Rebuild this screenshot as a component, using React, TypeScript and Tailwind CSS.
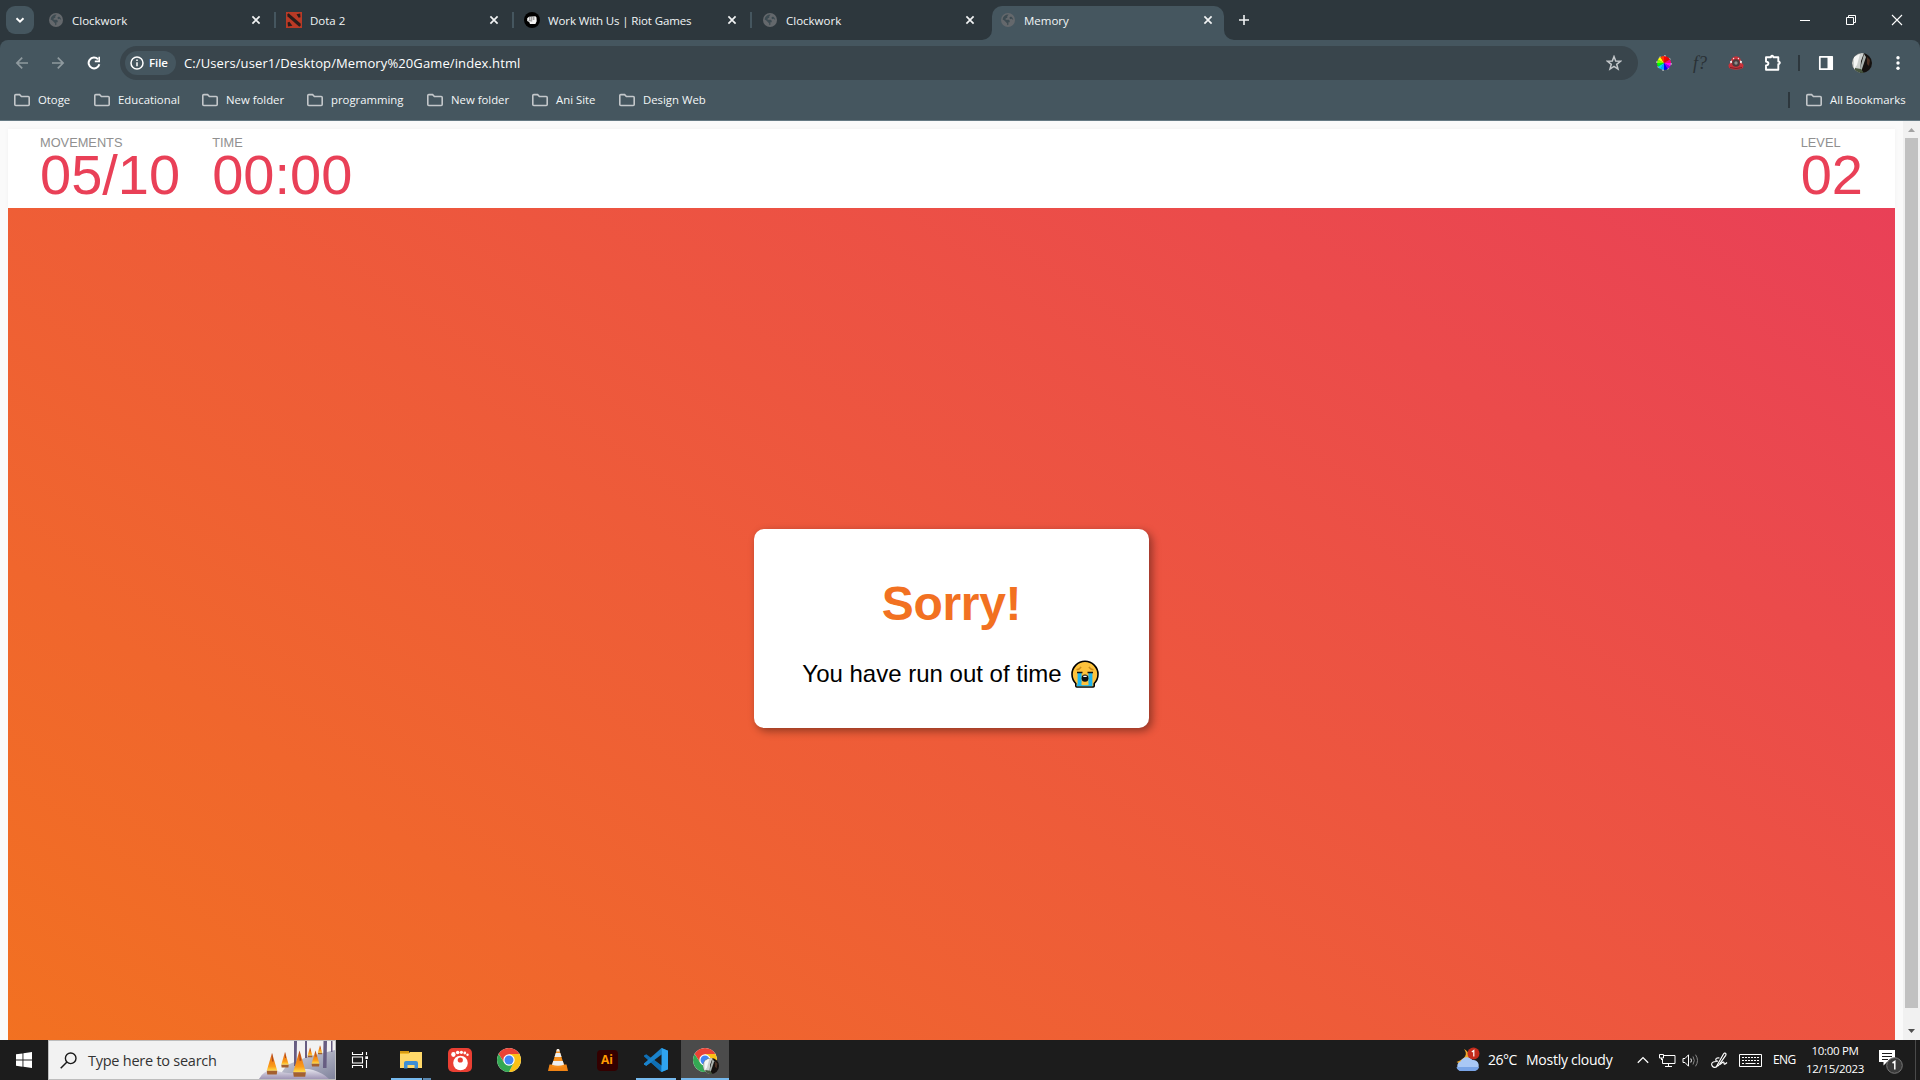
import React from "react";

const ui = "font-['Open_Sans','Noto_Sans',sans-serif]";

function Globe() {
  return (
    <svg width="14" height="14" viewBox="0 0 14 14" className="shrink-0">
      <circle cx="7" cy="7" r="7" fill="#64686c" />
      <path d="M7.6 1.6 6.3 3.3v1.4L4.6 5.6v1.2h3.2l.9 1v1.4H7.4v2.6l-1.2.4v-1.8L4.8 9 3 7.2 1.6 6.4a5.5 5.5 0 0 1 6-4.8Z" fill="#3d4b52" />
      <path d="M10 3.4 8.4 4.6l.6 1.6 1.6-.4 1.7 1.3a5.4 5.4 0 0 0-2.3-3.7Z" fill="#3d4b52" />
    </svg>
  );
}

function Dota() {
  return (
    <svg width="16" height="16" viewBox="0 0 16 16" className="shrink-0">
      <rect width="16" height="16" fill="#b93a26" />
      <path d="m1.2 2.4 1.4-1.2 12 10.2.2 2.200-1.500 1.100L1.600 4.600Z" fill="#2a1d1b" />
      <path d="m10.500 2.200 3.700-.6.3 3.600-1.800.6Z" fill="#2a1d1b" />
      <path d="m1.600 10.500 1.800-.8 3 4.100-4.400.6Z" fill="#2a1d1b" />
    </svg>
  );
}

function Fist() {
  return (
    <svg width="16" height="16" viewBox="0 0 16 16" className="shrink-0">
      <circle cx="8" cy="8" r="8" fill="#000" />
      <path d="M3.200 6.200 5 4.800l6.400-.6 1.100 1.200.2 3.800-1.300 2.700-5.400.2-.8-2.200-2-1Z" fill="#f4f4f4" />
      <path d="M5.800 5v3M7.800 4.800v3.400M9.800 4.700V8M4.600 8.600l3.600.4" stroke="#555" strokeWidth=".7" fill="none" />
    </svg>
  );
}

function CloseX() {
  return (
    <svg width="10" height="10" viewBox="0 0 10 10" className="shrink-0">
      <path d="m1.400 1.400 7.200 7.200m0-7.200L1.400 8.600" stroke="#f1f3f4" strokeWidth="1.700" />
    </svg>
  );
}

function Tab({ icon, title, sep, active }: { icon: React.ReactNode; title: string; sep?: boolean; active?: boolean }) {
  return (
    <div
      className={
        active
          ? "relative flex h-[34px] w-[232px] shrink-0 items-center rounded-t-[10px] bg-[#45565f] pb-[6px]"
          : "relative flex h-[34px] w-[238px] shrink-0 items-center pb-[6px]"
      }
    >
      <div className="ml-[8px] flex w-4 shrink-0 justify-center">{icon}</div>
      <span
        className={`ml-2 w-[179px] whitespace-nowrap pt-px text-[11.5px] leading-[16px] text-[#f1f5f6] ${
          title.length > 12 ? "tracking-[-0.12px]" : ""
        }`}
      >
        {title}
      </span>
      <CloseX />
      {sep && <div className="ml-[13px] h-4 w-[2px] bg-[#45565f]" />}
      {active && (
        <>
          <svg className="absolute bottom-0 -left-[10px]" width="10" height="10"><path d="M10 0v10H0A10 10 0 0 0 10 0Z" fill="#45565f" /></svg>
          <svg className="absolute -right-[10px] bottom-0" width="10" height="10"><path d="M0 0v10h10A10 10 0 0 1 0 0Z" fill="#45565f" /></svg>
        </>
      )}
    </div>
  );
}

function Folder() {
  return (
    <svg width="18" height="14" viewBox="0 0 18 14" className="shrink-0">
      <path d="M1.800 2.600q0-1 1-1H6.600l1.800 1.900h6.800q1 0 1 1v7q0 1-1 1H2.800q-1 0-1-1Z" fill="none" stroke="#c3c7ca" strokeWidth="1.600" />
    </svg>
  );
}

const bookmarks: [string, string][] = [
  ["Otoge", "w-[80px]"],
  ["Educational", "w-[108px]"],
  ["New folder", "w-[105px]"],
  ["programming", "w-[120px]"],
  ["New folder", "w-[105px]"],
  ["Ani Site", "w-[87px]"],
  ["Design Web", "w-[110px]"],
];

const wheel = ["#f00", "#ff3c00", "#ff0", "#7dff00", "#0f0", "#00d0ff", "#00a8ff", "#00f", "#80f", "#f0f", "#ff0080", "#e00"];

function ColorWheel() {
  return (
    <svg width="16" height="16" viewBox="-8 -8 16 16">
      {wheel.map((_, i) => {
        const a = ((i * 30 - 90) * Math.PI) / 180;
        const b = ((i * 30 - 60) * Math.PI) / 180;
        return <path key={i} d={`M0 0L${7 * Math.cos(a)} ${7 * Math.sin(a)}A7 7 0 0 1 ${7 * Math.cos(b)} ${7 * Math.sin(b)}Z`} fill={wheel[(12 - i) % 12]} />;
      })}
      <circle r="7.300" fill="none" stroke="#c9c9c9" strokeWidth=".9" strokeDasharray="2 3.700" />
    </svg>
  );
}

function Avatar({ size }: { size: number }) {
  return (
    <svg width={size} height={size} viewBox="0 0 20 20">
      <defs>
        <clipPath id={"av" + size}><circle cx="10" cy="10" r="10" /></clipPath>
      </defs>
      <g clipPath={`url(#av${size})`}>
        <rect width="20" height="20" fill="#15110f" />
        <path d="M0 0h12L9 8 8 20H0Z" fill="#cdd1cf" />
        <path d="M2 4 8 1 5 12 2 16Z" fill="#f5f6f5" />
        <path d="M12 1 7 19h2l5-15Z" fill="#aab1ad" />
        <path d="M15 4l3 3-1 6-2-2Z" fill="#4a2f22" />
        <path d="M3 15l6 1 3 4H3Z" fill="#46553f" />
      </g>
    </svg>
  );
}

function Browser() {
  return (
    <div className={`flex h-[121px] flex-col border-b border-[#657983] bg-[#2d373d] ${ui}`}>
      <div className="flex h-10 shrink-0 pt-[6px]">
        <div className="mr-[6px] ml-[6px] flex h-7 w-7 items-center justify-center rounded-[9px] bg-[#45565f]">
          <svg width="10" height="8" viewBox="0 0 10 8"><path d="m1.500 2.200 3.500 3.400 3.500-3.400" fill="none" stroke="#fff" strokeWidth="1.900" /></svg>
        </div>
        <Tab icon={<Globe />} title="Clockwork" sep />
        <Tab icon={<Dota />} title="Dota 2" sep />
        <Tab icon={<Fist />} title="Work With Us | Riot Games" sep />
        <Tab icon={<Globe />} title="Clockwork" />
        <Tab icon={<Globe />} title="Memory" active />
        <svg width="12" height="12" viewBox="0 0 12 12" className="mt-2 ml-[14px]"><path d="M6 1v10M1 6h10" stroke="#f1f3f4" strokeWidth="1.600" /></svg>
        <div className="ml-auto flex h-7 items-center">
          <svg width="12" height="12" viewBox="0 0 12 12" className="mr-[34px]"><path d="M1 6.500h10" stroke="#fff" /></svg>
          <svg width="12" height="12" viewBox="0 0 12 12" className="mr-[34px]"><path d="M1.500 3.500h7v7h-7ZM3.500 3.500v-2h7v7h-2" fill="none" stroke="#fff" /></svg>
          <svg width="12" height="12" viewBox="0 0 12 12" className="mr-[17px]"><path d="m1 1 10 10M11 1 1 11" stroke="#fff" strokeWidth="1.100" /></svg>
        </div>
      </div>
      <div className="flex h-20 flex-col rounded-t-[8px] bg-[#45565f]">
        <div className="flex h-[46px] shrink-0 items-center">
          <svg width="14" height="14" viewBox="0 0 14 14" className="ml-[15px]"><path d="M13 7H2m5.200-5.300L1.900 7l5.300 5.300" fill="none" stroke="#8f9a9f" strokeWidth="1.700" /></svg>
          <svg width="14" height="14" viewBox="0 0 14 14" className="ml-[22px]"><path d="M1 7h11M6.800 1.700 12.100 7l-5.300 5.300" fill="none" stroke="#8f9a9f" strokeWidth="1.700" /></svg>
          <svg width="14" height="14" viewBox="0 0 14 14" className="ml-[22px]"><path d="M12.300 8.200A5.400 5.400 0 1 1 11 3.300" fill="none" stroke="#fff" strokeWidth="2" /><path d="M13 .8v5.400H7.800V4.600h3.600V.8Z" fill="#fff" /></svg>
          <div className="ml-[19px] flex h-[34px] w-[1518px] items-center rounded-full bg-[#39454c]">
            <div className="ml-[5px] flex h-6 w-[51px] items-center rounded-full bg-[#45565f]">
              <svg width="14" height="14" viewBox="0 0 14 14" className="ml-[5px]"><circle cx="7" cy="7" r="6" fill="none" stroke="#fff" strokeWidth="1.500" /><path d="M7 6.200v4M7 3.500v1.500" stroke="#fff" strokeWidth="1.500" /></svg>
              <span className="ml-[5px] text-[11.5px] leading-4 font-semibold tracking-[-0.1px] text-white">File</span>
            </div>
            <span className="ml-2 text-[13px] leading-4 tracking-[0.11px] text-white">C:/Users/user1/Desktop/Memory%20Game/index.html</span>
            <svg width="16" height="16" viewBox="0 0 16 16" className="mr-4 ml-auto"><path d="m8 1.600 1.700 4.500 4.700.2-3.700 3 1.300 4.700L8 11.300 4 14l1.300-4.700-3.700-3 4.700-.2Z" fill="none" stroke="#c3c7ca" strokeWidth="1.500" /></svg>
          </div>
          <div className="ml-[18px] flex w-4 justify-center"><ColorWheel /></div>
          <div className="ml-[18px] flex w-[20px] justify-center font-['Liberation_Serif',serif] text-[18px] leading-5 text-[#2a3135] italic">f?</div>
          <svg width="18" height="16" viewBox="0 0 18 16" className="ml-[17px]">
            <path d="M3 8 5 3q4-3.600 8 0l2 5 1.600 2-.6 3q-7 3.500-14 0l-.6-3Z" fill="#c8323a" />
            <circle cx="9" cy="8" r="3.800" fill="#4b3b3c" /><circle cx="9" cy="8" r="1.700" fill="#8b8e8c" />
            <path d="m3 6.200 2-.6v2.200l-1.600.6Zm12 0-2-.6v2.200l1.600.6ZM6 2.700l1.600.5L6 4.500Zm6 0-1.600.5L12 4.500Z" fill="#f0eeee" />
            <path d="M3 12.500q6 2 12 0" stroke="#7b2026" fill="none" />
          </svg>
          <svg width="18" height="18" viewBox="0 0 18 18" className="ml-[19px]"><path d="M2 3.300h5V2.600q1-1.700 2.300 0v.7h5v4.300h.7q1.700 1.200 0 2.500h-.7v5.600H2v-4.200q2.400-.4 2.400-2T2 7.500Z" fill="none" stroke="#fff" strokeWidth="1.900" strokeLinejoin="round" /></svg>
          <div className="ml-[16px] h-4 w-[2px] bg-[#2d373d]" />
          <svg width="16" height="16" viewBox="0 0 16 16" className="ml-[18px]"><path d="M1.800 1.800h12.400v12.400H1.800Z" fill="none" stroke="#fff" strokeWidth="1.700" strokeLinejoin="round" /><path d="M9.500 1.500h5v13h-5Z" fill="#fff" /></svg>
          <div className="ml-[18px]"><Avatar size={20} /></div>
          <svg width="4" height="16" viewBox="0 0 4 16" className="ml-[24px]" fill="#fff"><circle cx="2" cy="2.700" r="1.700" /><circle cx="2" cy="8" r="1.700" /><circle cx="2" cy="13.300" r="1.700" /></svg>
        </div>
        <div className="flex h-7 items-center pl-[13px] text-[11.35px] leading-4 text-[#f4f7f8]">
          {bookmarks.map(([name, w], i) => (
            <div key={i} className={`flex shrink-0 items-center ${w}`}>
              <Folder />
              <span className="ml-[7px] whitespace-nowrap">{name}</span>
            </div>
          ))}
          <div className="ml-auto h-4 w-[2px] bg-[#2d373d]" />
          <div className="ml-[15px] flex w-[115px] items-center">
            <Folder />
            <span className="ml-[7px] whitespace-nowrap">All Bookmarks</span>
          </div>
        </div>
      </div>
    </div>
  );
}

function Stat({ label, value }: { label: string; value: string }) {
  return (
    <div className="flex flex-col">
      <span className="text-[12.8px] leading-[14px] text-[#909090]">{label}</span>
      <span className="text-[56px] leading-[50px] text-[#e94057]">{value}</span>
    </div>
  );
}

function Crying() {
  return (
    <svg width="28" height="28" viewBox="0 0 28 28" className="ml-[9px] shrink-0">
      <path d="M4.800 26V23.500A13 13 0 1 1 23.200 23.500V26q0 1-1 1H5.800q-1 0-1-1Z" fill="#fdc23c" stroke="#000" strokeWidth="1.600" />
      <path d="M6.600 13h4v11.500h6.800V13h4v13.200H5.700v-1.700h.9Z" fill="#1cb5f0" />
      <path d="M10.600 23.500h6.800v1.700h-6.800Z" fill="#fdc23c" />
      <path d="M6 12.500h5.500M16.500 12.500H22" stroke="#111" strokeWidth="1.500" />
      <path d="M5.500 9.800q3-.4 4.600-2.800M22.500 9.800q-3-.4-4.600-2.800" stroke="#c98a1b" strokeWidth="1.400" fill="none" />
      <path d="M10.600 18.200q0-3.600 3.400-3.600t3.400 3.600-3.400 3.600-3.400-3.600Z" fill="#0d0d0d" />
      <path d="M12.300 15.700h3.400v1.300h-3.400Z" fill="#fff" />
    </svg>
  );
}

function Page() {
  return (
    <div className="flex h-[919px] bg-[#fafafa] font-['Liberation_Sans',Arial,sans-serif]">
      <main className="mt-2 ml-2 flex h-[911px] w-[1887px] flex-col">
        <header className="flex h-[79px] shrink-0 gap-8 bg-white px-8 pt-[7px] shadow-[0_0_5px_rgba(0,0,0,0.04)]">
          <Stat label="MOVEMENTS" value="05/10" />
          <Stat label="TIME" value="00:00" />
          <div className="ml-auto"><Stat label="LEVEL" value="02" /></div>
        </header>
        <section className="flex h-[840px] shrink-0 justify-center bg-[linear-gradient(35deg,#f27121,#e94057)]">
          <div className="mt-[321px] flex h-[199px] w-[395px] flex-col items-center rounded-[10px] bg-white shadow-[3px_3px_8px_rgba(0,0,0,0.4)]">
            <h1 className="mt-[47px] text-[48px] leading-[55px] font-bold tracking-[-0.3px] text-[#f27121]">Sorry!</h1>
            <p className="mt-[29px] mr-[2px] flex items-center text-[24px] leading-[28px] text-black">
              You have run out of time
              <Crying />
            </p>
          </div>
        </section>
      </main>
      <div className="ml-auto flex w-[17px] flex-col items-center bg-[#f1f1f1]">
        <svg width="17" height="17" viewBox="0 0 17 17"><path d="m5 11 3.500-4 3.500 4Z" fill="#a3a3a3" /></svg>
        <div className="h-[870px] w-[13px] bg-[#c1c1c1]" />
        <svg width="17" height="17" viewBox="0 0 17 17" className="mt-[15px]"><path d="m5 6 3.500 4L12 6Z" fill="#505050" /></svg>
      </div>
    </div>
  );
}

function Chrome() {
  return (
    <svg width="24" height="24" viewBox="-12 -12 24 24">
      <circle r="12" fill="#fff" />
      <path d="M-10.390 -6A12 12 0 0 1 10.390 -6L0 -5.500 -4.700 2.700Z" fill="#ea4335" />
      <path d="M10.390 -6A12 12 0 0 1 0 12L4.700 2.700 0 -6Z" fill="#fbc116" />
      <path d="M0 12A12 12 0 0 1 -10.390 -6L-4.700 2.700 4.700 2.700Z" fill="#34a853" />
      <circle r="5.700" fill="#fff" /><circle r="4.500" fill="#4285f4" />
    </svg>
  );
}

function Cone({ x, y, s }: { x: number; y: number; s: number }) {
  return (
    <g transform={`translate(${x} ${y}) scale(${s})`}>
      <path d="M0-20-5-3h10Z" fill="url(#flame)" />
      <path d="M0-20 1.500-12H0Z" fill="#a84a22" />
      <path d="M-5-3H5l-.5 3.500h-9Z" fill="#a3602f" />
    </g>
  );
}

function SearchArt() {
  return (
    <svg width="78" height="38" viewBox="0 0 78 38" className="ml-auto">
      <defs>
        <linearGradient id="snow" x1="0" y1="0" x2="0" y2="1"><stop offset="0" stopColor="#e6e6ee" /><stop offset="1" stopColor="#9f95b5" /></linearGradient>
        <linearGradient id="slope" x1="0" y1="0" x2="1" y2="1"><stop offset="0" stopColor="#d9dae4" /><stop offset="1" stopColor="#80839c" /></linearGradient>
        <linearGradient id="flame" x1="0" y1="0" x2="0" y2="1"><stop offset="0" stopColor="#c4501f" /><stop offset=".4" stopColor="#ee7d14" /><stop offset=".75" stopColor="#fb9d1a" /><stop offset="1" stopColor="#ffdf4c" /></linearGradient>
      </defs>
      <path d="M30 24 50 16 78 9v29H20Z" fill="url(#slope)" />
      <path d="M37 0h3l-.5 25h-2.500ZM48 0h2v17h-2ZM66.500 0h3.500l-.5 27h-3.500ZM74 0h1.500v11H74Z" fill="#675d82" />
      <path d="M2 38Q8 27 20 30t16 2q10-6 20-3t16 9Z" fill="url(#snow)" />
      <Cone x={53} y={16} s={0.48} /><Cone x={63} y={13} s={0.44} />
      <Cone x={28} y={26} s={0.75} /><Cone x={58.5} y={25} s={0.78} />
      <Cone x={15} y={33} s={1.05} /><Cone x={42.5} y={35} s={1.27} />
    </svg>
  );
}

function AppButton({ children, bar, active }: { children: React.ReactNode; bar?: "split" | "wide"; active?: boolean }) {
  return (
    <div className={`flex h-10 w-12 shrink-0 flex-col items-center ${active ? "bg-[#4b4b4b]" : ""}`}>
      <div className="flex h-[38px] items-center pt-[2px]">{children}</div>
      {bar === "split" && <div className="flex h-[2px] w-10"><div className="w-[31px] bg-[#76b9ed]" /><div className="ml-px w-2 bg-[#5a88b0]" /></div>}
      {bar === "wide" && <div className={`h-[2px] bg-[#76b9ed] ${active ? "w-12" : "w-10"}`} />}
    </div>
  );
}

function Taskbar() {
  return (
    <div className={`flex h-10 items-center bg-[#1c1c1c] text-white ${ui}`}>
      <svg width="16" height="16" viewBox="0 0 16 16" className="ml-4 shrink-0"><path d="M0 2.300 6.500 1.400v6.200H0ZM7.400 1.200 16 0v7.600H7.400ZM0 8.500h6.500v6.200L0 13.800ZM7.400 8.500H16V16l-8.600-1.200Z" fill="#fff" /></svg>
      <div className="ml-4 flex h-10 w-[288px] shrink-0 items-center border border-[#bdbdbd] bg-[#f2f2f2]">
        <svg width="17" height="17" viewBox="0 0 17 17" className="ml-[11px]"><circle cx="10.700" cy="6.300" r="5.300" fill="none" stroke="#1a1a1a" strokeWidth="1.400" /><path d="M7 10 .7 16.300" stroke="#1a1a1a" strokeWidth="1.500" /></svg>
        <span className="ml-[11px] pt-px text-[14.5px] leading-5 tracking-[-0.25px] whitespace-nowrap text-[#333]">Type here to search</span>
        <SearchArt />
      </div>
      <div className="flex w-12 justify-center">
        <svg width="18" height="16" viewBox="0 0 18 16" fill="none" stroke="#fff" strokeWidth="1.100"><path d="M1.500 0v2.500h10V0M1.500 5h10v6h-10ZM1.500 16v-2.500h10V16M15.500 0v3M15.500 8v8" /><path d="M14.300 4.300h2.700V7h-2.700Z" fill="#fff" stroke="none" /></svg>
      </div>
      <div className="ml-[3px] flex gap-px">
        <AppButton bar="split">
          <svg width="22" height="20" viewBox="0 0 22 20"><path d="M0 1h8l1.500 2H22v15H0Z" fill="#f2b92b" /><path d="M0 4h8.500l1.500-2h12v16H0Z" fill="#ffd869" /><path d="M0 1h9v2H0Z" fill="#d79a12" /><path d="M4 18.500V13q0-2 2-2h10q2 0 2 2v5.500h-3.500V15h-7v3.500Z" fill="#3d8fd6" /></svg>
        </AppButton>
        <AppButton>
          <svg width="24" height="24" viewBox="0 0 24 24"><rect width="24" height="24" rx="5" fill="#ea3f33" /><circle cx="12.500" cy="15" r="7.300" fill="#fff" /><circle cx="12.300" cy="12" r="2.600" fill="#ea3f33" /><g fill="#fff"><ellipse cx="5.400" cy="6.500" rx="2.200" ry="2.400" /><circle cx="9.700" cy="4.500" r="1.800" /><circle cx="13.400" cy="4.300" r="1.600" /><circle cx="16.800" cy="5" r="1.400" /><circle cx="19.500" cy="6.700" r="1.200" /></g></svg>
        </AppButton>
        <AppButton><Chrome /></AppButton>
        <AppButton>
          <svg width="20" height="24" viewBox="0 0 20 24"><path d="M1.500 16.500h17L20 23H0Z" fill="#f08415" /><path d="M9 1h2l5.500 17.500q-6.500 2.500-13 0Z" fill="#f7901e" /><path d="M7.800 5h4.500l1.300 4H6.500ZM5.200 13h9.600l1.200 3.800q-6 2-12 0Z" fill="#eceff1" /><path d="M9 1h2l.8 2.500H8.200Z" fill="#e8e8e8" /></svg>
        </AppButton>
        <AppButton>
          <div className="flex h-[21px] w-[21px] items-center justify-center rounded-[4px] bg-[#330000] text-[12px] leading-none font-bold text-[#ff9a00]">Ai</div>
        </AppButton>
        <AppButton bar="wide">
          <svg width="24" height="24" viewBox="0 0 24 24"><path d="M17.500 0 24 2.800v18.400L17.500 24 7 14.300 2.300 17.800 0 16.600V15.500L17.500 6.500Z" fill="#1f8ad2" /><path d="M0 8.500v-1L2.300 6.200 17.500 17.700V24L0 8.500Z" fill="#0f6fb5" /><path d="M0 15.500 17.500 0v6.600L2.300 17.800 0 16.600Z" fill="#1a83cc" /><path d="M17.500 0 24 2.800v18.400L17.500 24Z" fill="#2fa4f0" /><path d="M17.500 6.600v10.800L10.300 12Z" fill="#1c1c1c" /></svg>
        </AppButton>
        <div className="relative">
          <AppButton bar="wide" active><Chrome /></AppButton>
          <div className="absolute top-[18px] left-[22px]"><Avatar size={16} /></div>
        </div>
      </div>
      <div className="ml-auto flex shrink-0 items-center">
        <svg width="26" height="26" viewBox="0 0 26 26">
          <path d="M9 2q6 8-7.500 13A9 9 0 0 0 12 14.500 8 8 0 0 0 9 2Z" fill="#f0a92a" />
          <path d="M6 24a5 5 0 0 1-.5-9.500 7 7 0 0 1 12-1.500 5.600 5.600 0 0 1 2 11Z" fill="#a9c8f5" />
          <path d="M6 24a5 5 0 0 1-4.500-4h22.600a5.600 5.600 0 0 1-4.600 4Z" fill="#79a4e6" />
          <circle cx="18.500" cy="6.500" r="6" fill="#c42b1c" />
          <path d="m16.800 5 2-1.500v6" stroke="#fff" strokeWidth="1.200" fill="none" />
        </svg>
        <span className="ml-[7px] w-[38px] text-[14px] leading-5 tracking-[-0.5px] whitespace-nowrap">26°C</span>
        <span className="w-[110px] text-[14px] leading-5 tracking-[-0.25px] whitespace-nowrap">Mostly cloudy</span>
        <svg width="12" height="8" viewBox="0 0 12 8" className="ml-[1px]"><path d="m.8 6.800 5.200-5.200 5.200 5.200" fill="none" stroke="#fff" strokeWidth="1.300" /></svg>
        <svg width="17" height="15" viewBox="0 0 17 15" className="ml-[10px]" fill="none" stroke="#fff"><path d="M5 2.500h11v8H3.500V6M9.500 10.500v3M6 13.500h7M.5 1.500h4V5h-4ZM2.500 5v2" /></svg>
        <svg width="17" height="15" viewBox="0 0 17 15" className="ml-[6px]" fill="none" stroke="#fff"><path d="M1 5.500h2l3.500-3.700v11.400L3 9.500H1ZM8.800 5.500q1.300 2 0 4" /><path d="M11 3.500q2.600 4 0 8M13.500 1.700q4 5.800 0 11.600" stroke="#888" /></svg>
        <svg width="17" height="17" viewBox="0 0 17 17" className="ml-[12px]" fill="none" stroke="#fff" strokeWidth="1.200"><path d="M6 13.500 12.500 2q1-1.500 2-.7t.2 2L7.500 13.500l-2 1Z" /><path d="M8.500 6Q4 5.500 5 8.500q0 1 2 .5M5.500 9.500Q0 9.500.8 13q1.200 3.500 5 1.700M9 12.500q4-4 4-1.500t3-.5" /></svg>
        <svg width="23" height="13" viewBox="0 0 23 13" className="ml-[11px]" fill="none" stroke="#fff"><path d="M.5.500h22v12H.500Z" /><path d="M3 3.500h17M3 6.500h17" strokeDasharray="2 1" /><path d="M3 9.500h2M6.500 9.500h10M18 9.500h2" /></svg>
        <span className="ml-[11px] w-[32px] text-[12px] leading-5 tracking-[-0.6px]">ENG</span>
        <div className="flex w-[60px] flex-col items-center text-[11.5px] leading-[18px] tracking-[-0.3px] whitespace-nowrap"><span>10:00 PM</span><span>12/15/2023</span></div>
        <svg width="26" height="26" viewBox="0 0 26 26" className="mt-[3px] mr-[11px] ml-[13px]">
          <path d="M1 1h16v12H9l-3.500 3.500V13H1Z" fill="#fff" />
          <path d="M4 4.500h10M4 7.500h10M4 10.500h6" stroke="#1c1c1c" />
          <circle cx="16.500" cy="16.500" r="7.800" fill="#3a3a3a" stroke="#777" />
          <path d="m14.500 14 2.300-1.500v8" stroke="#fff" strokeWidth="1.500" fill="none" />
        </svg>
        <div className="mr-1 h-10 w-px bg-[#4a4a4a]" />
      </div>
    </div>
  );
}

export default function App() {
  return (
    <div className="h-[1080px] w-[1920px] overflow-hidden">
      <Browser />
      <div className="h-[919px] overflow-hidden"><Page /></div>
      <Taskbar />
    </div>
  );
}
